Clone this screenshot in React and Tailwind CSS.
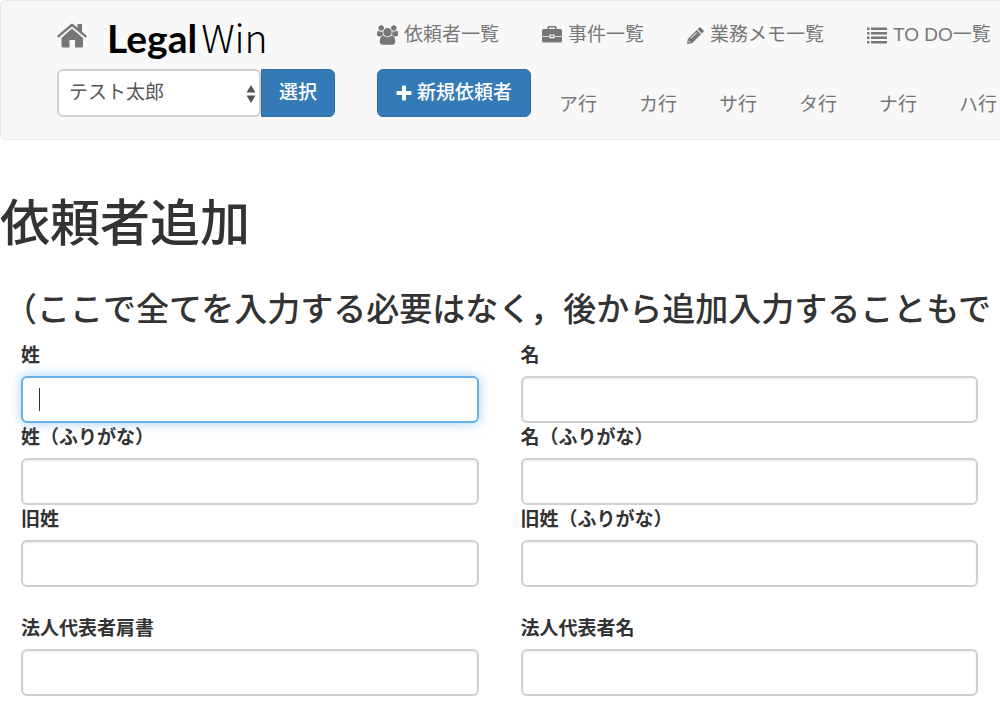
import { useState } from "react"

const navLinks = [
  { name: "依頼者一覧", href: "#clients", icon: UsersIcon },
  { name: "事件一覧", href: "#cases", icon: BriefcaseIcon },
  { name: "業務メモ一覧", href: "#memos", icon: PencilIcon },
  { name: "TO DO一覧", href: "#todos", icon: ListIcon },
]

const kanaRows = ["ア行", "カ行", "サ行", "タ行", "ナ行", "ハ行"]

const fieldRows = [
  [
    { id: "last-name", label: "姓", active: true },
    { id: "first-name", label: "名" },
  ],
  [
    { id: "last-name-kana", label: "姓（ふりがな）" },
    { id: "first-name-kana", label: "名（ふりがな）" },
  ],
  [
    { id: "former-name", label: "旧姓" },
    { id: "former-name-kana", label: "旧姓（ふりがな）" },
  ],
]

const corporateRows = [
  [
    { id: "representative-title", label: "法人代表者肩書" },
    { id: "representative-name", label: "法人代表者名" },
  ],
]

function HomeIcon() {
  return (
    <svg width="30" height="25" viewBox="0 0 30 25" fill="currentColor" aria-hidden="true">
      <path d="M15 5.500 26 15V23q0 1.500-1.500 1.500H18V17h-5.500v7.500H6Q4.500 24.500 4.500 23v-8z" />
      <path d="M14 .9q1-.8 2 0l4.500 3.900V1H25v7.700l5 4.400-1.400 1.700L15 3.400 1.400 14.800 0 13.100z" />
    </svg>
  )
}

function UsersIcon() {
  return (
    <svg width="21" height="20" viewBox="0 0 1920 1792" fill="currentColor" aria-hidden="true">
      <path d="M593 896q-162 5-265 128h-134q-82 0-138-40.5t-56-118.5q0-353 124-353 6 0 43.5 21t97.5 42.5 119 21.5q67 0 133-23-5 37-5 66 0 159 93 287zm1071 637q0 120-73 189.5t-194 69.5h-874q-121 0-194-69.5t-73-189.5q0-53 3.5-103.5t14-109 26.5-108.5 43-97.5 62-81 85.5-53.5 111.5-20q10 0 43 21.5t73 48 107 48 135 21.5 135-21.5 107-48 73-48 43-21.5q61 0 111.5 20t85.5 53.5 62 81 43 97.5 26.5 108.5 14 109 3.5 103.5zm-1024-1277q0 106-75 181t-181 75-181-75-75-181 75-181 181-75 181 75 75 181zm704 384q0 159-112.5 271.5t-271.5 112.5-271.5-112.5-112.5-271.5 112.5-271.5 271.5-112.5 271.5 112.5 112.5 271.5zm576 225q0 78-56 118.5t-138 40.5h-134q-103-123-265-128 93-128 93-287 0-29-5-66 66 23 133 23 59 0 119-21.5t97.5-42.5 43.5-21q124 0 124 353zm-128-609q0 106-75 181t-181 75-181-75-75-181 75-181 181-75 181 75 75 181z" />
    </svg>
  )
}

function BriefcaseIcon() {
  return (
    <svg width="20" height="20" viewBox="0 0 20 20" fill="currentColor" aria-hidden="true">
      <path
        fillRule="evenodd"
        d="M5.500 4V2.300Q5.500 1 7 1h6q1.500 0 1.500 1.300V4h4Q20 4 20 5.500V11h-7.500V9.500h-5V11H0V5.500Q0 4 1.500 4zm1.500 0h6V2.400H7z"
      />
      <path d="M8.700 10.500h2.600v1.500H8.700z" />
      <path d="M0 11.700h7.500v1.500h5v-1.500H20V16q0 1.500-1.500 1.500h-17Q0 17.500 0 16z" />
    </svg>
  )
}

function PencilIcon() {
  return (
    <svg width="17" height="17" viewBox="0 0 17 17" fill="currentColor" aria-hidden="true">
      <path d="M12 .7q.9-.9 1.900 0l2.400 2.400q.9.900 0 1.900l-1.500 1.500L10.500 2.200z" />
      <path
        fillRule="evenodd"
        d="m9.700 3 4.300 4.300-8.900 8.900L0 17l.8-5.100zM1.900 13.500l-.4 2 2-.4zM9.400 5.200l-6 6 .6.6 6-6z"
      />
    </svg>
  )
}

function ListIcon() {
  return (
    <svg width="20" height="17" viewBox="0 0 20 17" fill="currentColor" aria-hidden="true">
      <path d="M0 .5h2.500V3H0zM0 5h2.500v2.500H0zM0 9.500h2.500V12H0zM0 14h2.500v2.500H0zM4 .5h16V3H4zM4 5h16v2.500H4zM4 9.500h16V12H4zM4 14h16v2.500H4z" />
    </svg>
  )
}

function PlusIcon() {
  return (
    <svg width="16" height="16" viewBox="0 0 16 16" fill="currentColor" aria-hidden="true">
      <path d="M7 .5h2q1 0 1 1V6h4.500q1 0 1 1v2q0 1-1 1H10v4.500q0 1-1 1H7q-1 0-1-1V10H1.500q-1 0-1-1V7q0-1 1-1H6V1.500q0-1 1-1z" />
    </svg>
  )
}

function Navbar() {
  const [staff, setStaff] = useState("テスト太郎")

  return (
    <nav className="flex h-[140px] gap-[42px] overflow-hidden rounded-l-md border border-r-0 border-[#e7e7e7] bg-[#f8f8f8] pl-14 text-[#777777]">
      <div className="w-[278px] shrink-0">
        <div className="flex h-[68px] items-center gap-5">
          <a href="#home" aria-label="ホーム">
            <HomeIcon />
          </a>
          <a
            href="#top"
            className="flex items-baseline gap-1 pt-1 font-['Lato','Open_Sans',sans-serif] text-[39px] leading-none text-black"
          >
            <b className="font-bold">Legal</b>
            <span className="font-['Noto_Sans_CJK_JP',sans-serif] font-light">Win</span>
          </a>
        </div>
        <form className="flex" onSubmit={(e) => e.preventDefault()}>
          <div className="relative flex-1">
            <select
              aria-label="担当者"
              value={staff}
              onChange={(e) => setStaff(e.target.value)}
              className="h-12 w-full appearance-none rounded-md border-2 border-[#d0d0d0] bg-white pr-8 pb-px pl-[10px] text-[#555555]"
            >
              <option>テスト太郎</option>
            </select>
            <svg
              className="pointer-events-none absolute top-4 right-[5px]"
              width="10"
              height="18"
              viewBox="0 0 10 18"
              fill="#555555"
              aria-hidden="true"
            >
              <path d="M5 0l4.500 7.500h-9zM5 18l4.500-7.500h-9z" />
            </svg>
          </div>
          <button
            type="submit"
            className="h-12 w-[74px] rounded-r-md border border-[#2e6da4] bg-[#337ab7] font-medium text-white"
          >
            選択
          </button>
        </form>
      </div>

      <div className="shrink-0">
        <ul className="flex h-[68px] items-center gap-[43px] whitespace-nowrap">
          {navLinks.map(({ name, href, icon: Icon }) => (
            <li key={href}>
              <a href={href} className="flex items-center gap-[6px]">
                <Icon />
                {name}
              </a>
            </li>
          ))}
        </ul>
        <div className="flex gap-7">
          <button
            type="button"
            className="flex h-12 w-[154px] items-center justify-center gap-[5px] rounded-md border border-[#2e6da4] bg-[#337ab7] font-medium text-white"
          >
            <PlusIcon />
            新規依頼者
          </button>
          <ul className="flex gap-[42px] pt-[22px] whitespace-nowrap">
            {kanaRows.map((row) => (
              <li key={row}>
                <a href="#kana">{row}</a>
              </li>
            ))}
          </ul>
        </div>
      </div>
    </nav>
  )
}

function Field({ id, label, active }) {
  return (
    <div>
      <label htmlFor={id} className="block pt-px pb-[6px] leading-7 font-bold">
        {label}
      </label>
      <div className="relative">
        <input
          id={id}
          type="text"
          autoFocus={active}
          className="block h-[47px] w-full rounded-md border-2 border-[#d0d0d0] bg-white px-4 text-[#555555] caret-transparent shadow-[inset_0_1px_2px_rgba(0,0,0,0.08)] outline-none focus:border-[#66afe9] focus:shadow-[0_0_12px_rgba(102,175,233,0.6)]"
        />
        {active && (
          <span className="pointer-events-none absolute top-3 left-[18px] h-[23px] w-px bg-[#333333]" />
        )}
      </div>
    </div>
  )
}

function FieldGroup({ rows }) {
  return (
    <div className="grid grid-cols-2 gap-x-[42px]">
      {rows.flat().map((field) => (
        <Field key={field.id} {...field} />
      ))}
    </div>
  )
}

export default function App() {
  return (
    <div className="overflow-hidden bg-white font-['Liberation_Sans','Noto_Sans_CJK_JP',sans-serif] text-[19px] leading-7 text-[#333333]">
      <Navbar />
      <main>
        <h1 className="mt-14 text-[50px] leading-[56px] font-medium">依頼者追加</h1>
        <h3 className="mt-[39px] overflow-hidden pl-1 text-[33px] leading-[38px] font-medium whitespace-nowrap">
          （ここで全てを入力する必要はなく，後から追加入力することもで
        </h3>
        <form className="flex flex-col gap-[27px] pt-3 pr-[22px] pl-[21px]" onSubmit={(e) => e.preventDefault()}>
          <FieldGroup rows={fieldRows} />
          <FieldGroup rows={corporateRows} />
        </form>
      </main>
    </div>
  )
}
